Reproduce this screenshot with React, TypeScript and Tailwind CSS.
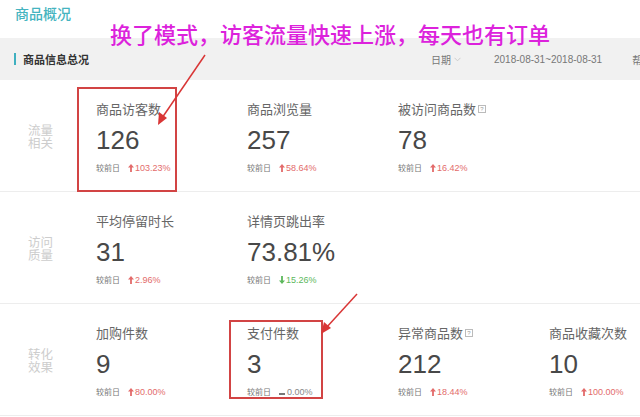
import React from "react";

type Trend = "up" | "down" | "flat";
type Metric = { title: string; value: string; trend: Trend; pct: string; help?: boolean };

const rows: { label: [string, string]; items: Metric[] }[] = [
  {
    label: ["流量", "相关"],
    items: [
      { title: "商品访客数", value: "126", trend: "up", pct: "103.23%" },
      { title: "商品浏览量", value: "257", trend: "up", pct: "58.64%" },
      { title: "被访问商品数", value: "78", trend: "up", pct: "16.42%", help: true },
    ],
  },
  {
    label: ["访问", "质量"],
    items: [
      { title: "平均停留时长", value: "31", trend: "up", pct: "2.96%" },
      { title: "详情页跳出率", value: "73.81%", trend: "down", pct: "15.26%" },
    ],
  },
  {
    label: ["转化", "效果"],
    items: [
      { title: "加购件数", value: "9", trend: "up", pct: "80.00%" },
      { title: "支付件数", value: "3", trend: "flat", pct: "0.00%" },
      { title: "异常商品数", value: "212", trend: "up", pct: "18.44%", help: true },
      { title: "商品收藏次数", value: "10", trend: "up", pct: "100.00%" },
    ],
  },
];

const cjk = { fontFamily: '"Noto Sans CJK SC", "Noto Sans", sans-serif' };
const num = { fontFamily: '"Liberation Sans", Arial, sans-serif' };

function TrendMark({ trend }: { trend: Trend }) {
  if (trend === "up")
    return (
      <svg width="6" height="8" viewBox="0 0 6 8" className="mr-[1px]">
        <path d="M3 0 L6 3.6 H3.9 V8 H2.1 V3.6 H0 Z" fill="#e36b6b" />
      </svg>
    );
  if (trend === "down")
    return (
      <svg width="6" height="8" viewBox="0 0 6 8" className="mr-[1px]">
        <path d="M3 8 L6 4.4 H3.9 V0 H2.1 V4.4 H0 Z" fill="#5cb85c" />
      </svg>
    );
  return <span className="inline-block w-[6px] h-[2px] bg-[#777] mr-[2px] mt-[3px]" />;
}

function Cell({ m }: { m: Metric }) {
  const pctColor = m.trend === "up" ? "text-[#e36b6b]" : m.trend === "down" ? "text-[#5cb85c]" : "text-[#888]";
  return (
    <div className="w-[151px] shrink-0 pt-[21px] flex flex-col">
      <div className="flex items-center h-[16px] text-[13px] leading-[16px] text-[#666] whitespace-nowrap" style={cjk}>
        <span>{m.title}</span>
        {m.help && (
          <span
            className="ml-[2px] inline-flex items-center justify-center w-[8px] h-[8px] border border-[#bbb] text-[6px] leading-none text-[#999]"
            style={num}
          >
            ?
          </span>
        )}
      </div>
      <div className="mt-[8px] h-[30px] text-[26px] leading-[30px] text-[#484848]" style={num}>
        {m.value}
      </div>
      <div className="mt-[7px] h-[12px] flex items-center whitespace-nowrap">
        <span className="text-[8px] leading-[12px] text-[#777]" style={cjk}>
          较前日
        </span>
        <span className="ml-[8px] flex items-center">
          <TrendMark trend={m.trend} />
          <span className={`text-[9px] leading-[12px] ${pctColor}`} style={num}>
            {m.pct}
          </span>
        </span>
      </div>
    </div>
  );
}

export default function App() {
  return (
    <div className="relative w-[640px] h-[417px] overflow-hidden bg-white" style={cjk}>
      <div className="h-[38px] pl-[15px] flex items-start pt-[3px]">
        <span className="text-[14px] leading-[20px] font-medium text-[#45b4c0]">商品概况</span>
      </div>

      <div className="h-[42px] bg-[#f1f1f1] flex items-center whitespace-nowrap">
        <span className="ml-[14px] w-[2px] h-[12px] bg-[#3fb0c0] shrink-0" />
        <span className="ml-[7px] text-[11px] font-bold text-[#333]">商品信息总况</span>
        <span className="ml-[342px] text-[10px] text-[#777]">日期</span>
        <svg width="7" height="5" viewBox="0 0 7 5" className="ml-[3px] shrink-0">
          <path d="M0.5 0.8 L3.5 3.8 L6.5 0.8" stroke="#ccc" strokeWidth="1" fill="none" />
        </svg>
        <span className="ml-[33px] text-[10px] text-[#777]" style={num}>
          2018-08-31~2018-08-31
        </span>
        <span className="ml-[30px] text-[10px] text-[#777]">帮</span>
      </div>

      {rows.map((r, i) => (
        <div key={i} className="h-[112px] flex border-b border-[#ededed]">
          <div className="w-[96px] shrink-0 pl-[28px] flex items-center">
            <div className="text-[12.5px] leading-[13px] text-[#cdcdcd]">
              {r.label[0]}
              <br />
              {r.label[1]}
            </div>
          </div>
          {r.items.map((m, j) => (
            <Cell key={j} m={m} />
          ))}
        </div>
      ))}

      {/* annotation overlays */}
      <div
        className="absolute left-[110px] top-[21px] text-[22px] leading-[24px] font-medium text-[#dc22dc] whitespace-nowrap"
        style={cjk}
      >
        换了模式，访客流量快速上涨，每天也有订单
      </div>
      <div className="absolute left-[77px] top-[87px] w-[100px] h-[105px] border-2 border-[#d24444]" />
      <div className="absolute left-[229px] top-[320px] w-[94px] h-[79px] border-2 border-[#d24444]" />
      <svg className="absolute left-0 top-0" width="640" height="417" viewBox="0 0 640 417">
        <line x1="205" y1="55" x2="162" y2="118" stroke="#d93636" strokeWidth="1.5" />
        <path d="M158 125 L159 112 L167 118 Z" fill="#d93636" />
        <line x1="357" y1="294" x2="326" y2="328" stroke="#d93636" strokeWidth="1.5" />
        <path d="M321 334 L324 322 L331 328 Z" fill="#d93636" />
      </svg>
    </div>
  );
}
